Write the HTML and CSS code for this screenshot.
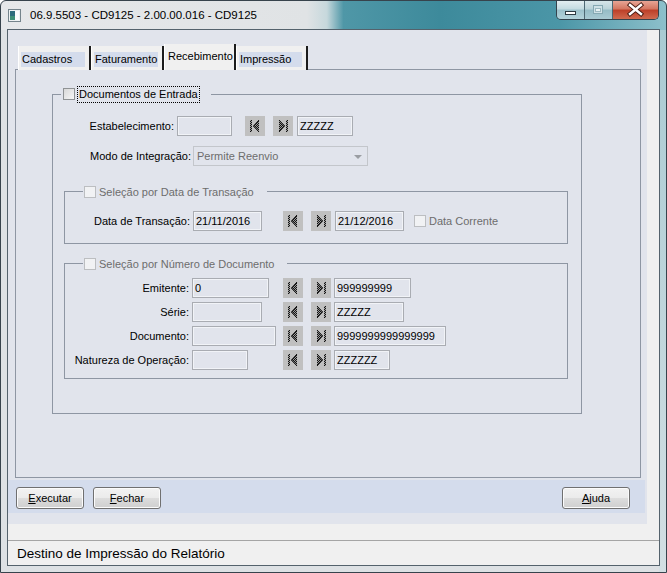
FILE: index.html
```html
<!DOCTYPE html>
<html lang="pt-BR">
<head>
    <meta charset="UTF-8">
    <meta name="viewport" content="width=device-width, initial-scale=1.0">
    <title>06.9.5503 - CD9125 - 2.00.00.016 - CD9125</title>
    <link rel="stylesheet" href="styles.css">
</head>
<body>
    <div class="window">
        <div class="titlebar">
            <svg class="app-icon" viewBox="0 0 13 13" width="13" height="13">
                <rect x="0.5" y="0.5" width="12" height="12" fill="#eef2f3" stroke="#75848c"/>
                <rect x="2" y="2" width="5" height="9" fill="#2e6c7c"/>
                <rect x="2" y="7" width="5" height="4" fill="#3f8f76"/>
                <rect x="7" y="2" width="4" height="9" fill="#fbfcfc"/>
            </svg>
            <span class="title">06.9.5503 - CD9125 - 2.00.00.016 - CD9125</span>
            <div class="caption">
                <span class="cap-btn cap-min">
                    <svg viewBox="0 0 27 18" width="27" height="18"><rect x="8.5" y="10.5" width="10" height="3" fill="#fff" stroke="#2e3a42"/></svg>
                </span>
                <span class="cap-btn cap-max">
                    <svg viewBox="0 0 27 18" width="27" height="18"><rect x="8.5" y="4.5" width="9" height="8" fill="#cfe1e6" stroke="#86a9b3"/><rect x="10.5" y="7.5" width="5" height="3" fill="#e9f2f4" stroke="#9bb9c1"/></svg>
                </span>
                <span class="cap-btn cap-close">
                    <svg viewBox="0 0 45 18" width="45" height="18">
                        <path d="M17 4 L28 13 M28 4 L17 13" stroke="#4a1d14" stroke-width="4.4" stroke-linecap="square"/>
                        <path d="M17 4 L28 13 M28 4 L17 13" stroke="#fff" stroke-width="2.4" stroke-linecap="square"/>
                    </svg>
                </span>
            </div>
        </div>

        <div class="client">
            <div class="main">
                <div class="tabs">
                    <div class="tab"><span>Cadastros</span></div>
                    <div class="tab"><span>Faturamento</span></div>
                    <div class="tab active"><span>Recebimento</span></div>
                    <div class="tab"><span>Impressão</span></div>
                </div>

                <div class="tabpage">
                    <fieldset class="group outer">
                        <legend><span class="check"><span class="cb"></span><span class="focus">Documentos de Entrada</span></span></legend>

                        <div class="row r-estab">
                            <label class="lbl">Estabelecimento:</label>
                            <input class="field" type="text" value="" readonly>
                            <span class="nav"><svg viewBox="0 0 20 20"><use href="#i-first"/></svg></span>
                            <span class="nav"><svg viewBox="0 0 20 20"><use href="#i-last"/></svg></span>
                            <input class="field to" type="text" value="ZZZZZ" readonly>
                        </div>

                        <div class="row r-modo">
                            <label class="lbl">Modo de Integração:</label>
                            <div class="combo"><span>Permite Reenvio</span><span class="arrow"></span></div>
                        </div>

                        <fieldset class="group inner g-date">
                            <legend><span class="check"><span class="cb dis"></span><span>Seleção por Data de Transação</span></span></legend>
                            <div class="row">
                                <label class="lbl">Data de Transação:</label>
                                <div class="cell"><input class="field w69" type="text" value="21/11/2016" readonly></div>
                                <span class="nav"><svg viewBox="0 0 20 20"><use href="#i-first"/></svg></span>
                                <span class="nav"><svg viewBox="0 0 20 20"><use href="#i-last"/></svg></span>
                                <input class="field to w69" type="text" value="21/12/2016" readonly>
                                <span class="check muted today"><span class="cb dis"></span><span>Data Corrente</span></span>
                            </div>
                        </fieldset>

                        <fieldset class="group inner g-doc">
                            <legend><span class="check"><span class="cb dis"></span><span>Seleção por Número de Documento</span></span></legend>
                            <div class="row">
                                <label class="lbl">Emitente:</label>
                                <div class="cell"><input class="field w77" type="text" value="0" readonly></div>
                                <span class="nav"><svg viewBox="0 0 20 20"><use href="#i-first"/></svg></span>
                                <span class="nav"><svg viewBox="0 0 20 20"><use href="#i-last"/></svg></span>
                                <input class="field to w77" type="text" value="999999999" readonly>
                            </div>
                            <div class="row">
                                <label class="lbl">Série:</label>
                                <div class="cell"><input class="field w70" type="text" value="" readonly></div>
                                <span class="nav"><svg viewBox="0 0 20 20"><use href="#i-first"/></svg></span>
                                <span class="nav"><svg viewBox="0 0 20 20"><use href="#i-last"/></svg></span>
                                <input class="field to w70" type="text" value="ZZZZZ" readonly>
                            </div>
                            <div class="row">
                                <label class="lbl">Documento:</label>
                                <div class="cell"><input class="field w84" type="text" value="" readonly></div>
                                <span class="nav"><svg viewBox="0 0 20 20"><use href="#i-first"/></svg></span>
                                <span class="nav"><svg viewBox="0 0 20 20"><use href="#i-last"/></svg></span>
                                <input class="field to w112" type="text" value="9999999999999999" readonly>
                            </div>
                            <div class="row">
                                <label class="lbl">Natureza de Operação:</label>
                                <div class="cell"><input class="field w56" type="text" value="" readonly></div>
                                <span class="nav"><svg viewBox="0 0 20 20"><use href="#i-first"/></svg></span>
                                <span class="nav"><svg viewBox="0 0 20 20"><use href="#i-last"/></svg></span>
                                <input class="field to w56" type="text" value="ZZZZZZ" readonly>
                            </div>
                        </fieldset>
                    </fieldset>
                </div>

                <div class="actions">
                    <button class="btn"><u>E</u>xecutar</button>
                    <button class="btn"><u>F</u>echar</button>
                    <button class="btn help"><u>A</u>juda</button>
                </div>
            </div>

            <div class="status">Destino de Impressão do Relatório</div>
        </div>
    </div>

    <!-- icones dos botoes de faixa (primeiro / ultimo) -->
    <svg class="defs" width="0" height="0" aria-hidden="true">
        <defs>
            <pattern id="dots" width="2" height="2" patternUnits="userSpaceOnUse">
                <rect width="2" height="2" fill="#9c9c9c"/>
                <rect width="1" height="1" fill="#111"/>
                <rect x="1" y="1" width="1" height="1" fill="#111"/>
            </pattern>
            <symbol id="i-first" viewBox="0 0 20 20">
                <rect x="5" y="4" width="2" height="12" fill="url(#dots)"/>
                <path d="M8 10 L14 4 V16 Z" fill="url(#dots)"/>
                <path d="M14 4 L8.5 10 L14 16" fill="none" stroke="#111" stroke-width="1"/>
            </symbol>
            <symbol id="i-last" viewBox="0 0 20 20">
                <path d="M6 4 L12 10 L6 16 Z" fill="url(#dots)"/>
                <path d="M6 4 L11.5 10 L6 16" fill="none" stroke="#111" stroke-width="1"/>
                <rect x="13" y="4" width="2" height="12" fill="url(#dots)"/>
            </symbol>
        </defs>
    </svg>
</body>
</html>
```

FILE: styles.css
```css
* {
    box-sizing: border-box;
}
body {
    margin: 0;
    width: 667px;
    height: 573px;
    overflow: hidden;
    font-family: "Liberation Sans", Arial, sans-serif;
    font-size: 11px;
    color: #000;
    background: #fff;
}

/* moldura da janela */
.window {
    width: 667px;
    height: 573px;
    border: 1px solid #37434c;
    border-radius: 6px 6px 0 0;
    padding: 0 6px 6px;
    display: flex;
    flex-direction: column;
    background:
        linear-gradient(90deg, #e6e8ea 0, #e0e3e5 46%, #c6d8dc 49%, #4f97a7 51.5%, #3d8a9b 66%, #4b96a7 84%, #8dc0cb 100%) top / 100% 29px no-repeat,
        linear-gradient(#a7cad2, #d3dfe3) right / 7px 100% no-repeat,
        #dde1e4;
}
.titlebar {
    height: 28px;
    display: flex;
    align-items: center;
    padding-left: 1px;
}
.app-icon {
    flex: none;
    margin-right: 9px;
}
.title {
    font-size: 11.5px;
    color: #000;
}
.caption {
    margin-left: auto;
    margin-right: 1px;
    align-self: flex-start;
    display: flex;
    height: 19px;
    border: 1px solid #34434d;
    border-top: none;
    border-radius: 0 0 5px 5px;
    overflow: hidden;
}
.cap-btn {
    display: block;
    height: 18px;
}
.cap-btn svg {
    display: block;
}
.cap-min, .cap-max {
    width: 28px;
    border-right: 1px solid #4d6873;
    background: linear-gradient(#e3eef1 0, #c4dbe1 45%, #9cc1cb 50%, #b4d3db 100%);
}
.cap-max {
    background: linear-gradient(#d6e5e9 0, #b9d2d8 45%, #95bcc6 50%, #a9cad3 100%);
}
.cap-close {
    width: 45px;
    background: linear-gradient(#e7a595 0, #d3755f 45%, #bd3f28 50%, #d06a4f 100%);
}

.client {
    flex: 1;
    border: 1px solid #54626c;
    background: #f0f0f0;
    display: flex;
    flex-direction: column;
}
.main {
    width: 639px;
    height: 494px;
    background: #e1e4ec;
    padding-top: 14px;
}

/* abas */
.tabs {
    position: relative;
    z-index: 1;
    display: flex;
    align-items: flex-end;
    height: 26px;
    margin: 0 0 -1px 10px;
}
.tab {
    width: 73px;
    height: 24px;
    padding: 6px 4px 0 2px;
    background: #f0f0f0;
    border-left: 1px solid #fff;
    border-right: 2px solid #1c1c1c;
}
.tab span {
    display: block;
    height: 15px;
    line-height: 15px;
    padding-left: 1px;
    background: #d4dcec;
    white-space: nowrap;
}
.tab.active {
    width: 72px;
    height: 26px;
    padding-top: 5px;
}
.tab.active span {
    background: none;
}
.tab:last-child {
    width: 72px;
}
.tabpage {
    margin-left: 7px;
    width: 626px;
    height: 409px;
    border: 1px solid #8e96a3;
    padding: 16px 0 0 36px;
}

/* grupos */
.group {
    margin: 0;
    padding: 0;
    min-width: 0;
    border: 1px solid #8e96a3;
}
.group legend {
    padding: 0;
}
.check {
    display: flex;
    align-items: center;
    gap: 3px;
    white-space: nowrap;
}
.cb {
    flex: none;
    width: 12px;
    height: 12px;
    border: 1px solid #8f9294;
    background: linear-gradient(135deg, #d8d8d8, #f7f7f7);
}
.cb.dis {
    border-color: #bcbec1;
    background: #f1f2f4;
}
.focus {
    outline: 1px dotted #000;
    outline-offset: 0;
    padding: 0 1px;
    line-height: 15px;
}
.outer {
    width: 530px;
    padding: 14px 0 34px;
}
.outer > legend {
    margin-left: 8px;
    padding: 0 12px 0 2px;
}
.outer > legend .check {
    height: 16px;
}
.inner {
    width: 504px;
    margin-left: 11px;
}
.inner > legend {
    margin-left: 18px;
    padding: 0 13px 0 1px;
    color: #6d6d6d;
}
.inner > legend .check {
    height: 13px;
}
.g-date {
    margin-top: 19px;
    padding: 13px 0 12px;
}
.g-doc {
    margin-top: 13px;
    padding: 8px 0 8px;
}

/* linhas do formulario */
.row {
    display: flex;
    align-items: center;
    height: 20px;
}
.row + .row {
    margin-top: 4px;
}
.row.r-modo {
    margin-top: 10px;
}
.lbl {
    flex: none;
    text-align: right;
    white-space: nowrap;
}
.r-estab .lbl {
    width: 121px;
    margin-right: 3px;
}
.r-modo .lbl {
    width: 138px;
    margin-right: 2px;
}
.g-date .lbl {
    width: 125px;
    margin-right: 3px;
}
.g-doc .lbl {
    width: 124px;
    margin-right: 3px;
}
.cell {
    flex: none;
    width: 91px;
}
.g-date .cell {
    width: 90px;
}
.field {
    flex: none;
    display: block;
    width: 55px;
    height: 20px;
    margin: 0;
    padding: 0 2px;
    border: 1px solid #a9acb2;
    box-shadow: inset 0 0 0 1px #f1f3f7;
    background: #e1e4ec;
    font: inherit;
    color: #000;
    outline: none;
}
.r-estab .to {
    width: 56px;
    margin-left: 4px;
}
.to {
    margin-left: 3px;
}
.g-date .to {
    margin-left: 4px;
}
.w56 { width: 56px; }
.w69 { width: 69px; }
.w70 { width: 70px; }
.w77 { width: 77px; }
.w84 { width: 84px; }
.w112 { width: 112px; }

.nav {
    flex: none;
    display: block;
    width: 20px;
    height: 20px;
    background: #c0c0c0;
}
.nav svg {
    display: block;
    width: 20px;
    height: 20px;
}
.nav + .nav {
    margin-left: 8px;
}
.r-estab .field + .nav {
    margin-left: 13px;
}
.combo {
    width: 175px;
    height: 20px;
    display: flex;
    align-items: center;
    padding-left: 3px;
    border: 1px solid #c3c6cb;
    color: #6d6d6d;
}
.combo .arrow {
    margin: 1px 5px 0 auto;
    border-left: 4px solid transparent;
    border-right: 4px solid transparent;
    border-top: 4px solid #9a9da2;
}
.muted {
    color: #6d6d6d;
}
.today {
    margin-left: 10px;
}

/* barra de botoes */
.actions {
    margin-top: 2px;
    width: 637px;
    height: 33px;
    display: flex;
    align-items: flex-start;
    gap: 9px;
    padding: 7px 15px 0 8px;
    background: #d4dcec;
}
.btn {
    width: 68px;
    height: 22px;
    padding: 0;
    border: 1px solid #707070;
    border-radius: 3px;
    background: linear-gradient(#f2f2f2 0, #ebebeb 50%, #dddddd 50%, #cfcfcf 100%);
    box-shadow: inset 0 0 0 1px #fbfbfb;
    font: inherit;
    color: #000;
}
.help {
    margin-left: auto;
}

.status {
    margin-top: auto;
    height: 25px;
    display: flex;
    align-items: center;
    padding-left: 9px;
    border-top: 1px solid #a5a5a5;
    font-size: 13.5px;
}
.defs {
    display: block;
    width: 0;
    height: 0;
    overflow: hidden;
}
```
